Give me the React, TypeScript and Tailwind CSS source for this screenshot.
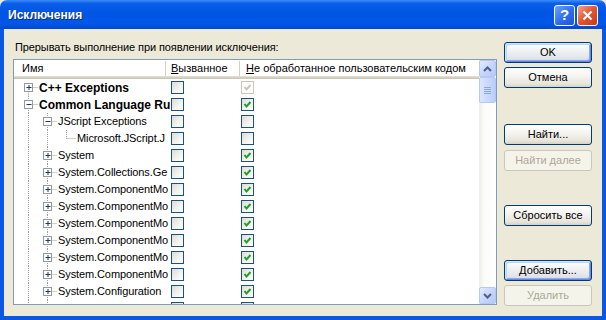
import React from "react";

type Row = {
  name: string;
  level: number;
  exp?: "+" | "-";
  bold?: boolean;
  c2: "on" | "off" | "grey";
};

// names are shown cut to the column width, as in the dialog
const rows: Row[] = [
  { name: "C++ Exceptions", level: 0, exp: "+", bold: true, c2: "grey" },
  { name: "Common Language Ru", level: 0, exp: "-", bold: true, c2: "on" },
  { name: "JScript Exceptions", level: 1, exp: "-", c2: "off" },
  { name: "Microsoft.JScript.J", level: 2, c2: "off" },
  { name: "System", level: 1, exp: "+", c2: "on" },
  { name: "System.Collections.Ge", level: 1, exp: "+", c2: "on" },
  { name: "System.ComponentMo", level: 1, exp: "+", c2: "on" },
  { name: "System.ComponentMo", level: 1, exp: "+", c2: "on" },
  { name: "System.ComponentMo", level: 1, exp: "+", c2: "on" },
  { name: "System.ComponentMo", level: 1, exp: "+", c2: "on" },
  { name: "System.ComponentMo", level: 1, exp: "+", c2: "on" },
  { name: "System.ComponentMo", level: 1, exp: "+", c2: "on" },
  { name: "System.Configuration", level: 1, exp: "+", c2: "on" },
  { name: "", level: 1, exp: "+", c2: "on" },
];

const TreeGlyph = ({ row, index }: { row: Row; index: number }) => {
  const w = 25 + 19 * row.level;
  const cx = 14.5 + 19 * row.level;
  const dot = { stroke: "#A0A0A0", strokeWidth: 1, strokeDasharray: "1 1" };
  return (
    <svg width={w} height={17} className="shrink-0">
      <line x1={14.5} y1={index === 0 ? 8.5 : 0} x2={14.5} y2={17} {...dot} />
      {row.level >= 1 && <line x1={33.5} y1={0} x2={33.5} y2={17} {...dot} />}
      {row.level === 2 && <line x1={52.5} y1={0} x2={52.5} y2={8.5} {...dot} />}
      <line x1={row.exp ? cx + 4 : cx} y1={8.5} x2={w - 1} y2={8.5} {...dot} />
      {row.exp && (
        <g>
          <rect x={cx - 4} y={4.5} width={8} height={8} fill="#ffffff" stroke="#919B9C" />
          <line x1={cx - 2} y1={8.5} x2={cx + 3} y2={8.5} stroke="#1E395B" />
          {row.exp === "+" && <line x1={cx + 0.5} y1={6} x2={cx + 0.5} y2={11} stroke="#1E395B" />}
        </g>
      )}
    </svg>
  );
};

const Check = ({ state }: { state: "on" | "off" | "grey" }) => (
  <div
    className={
      state === "grey"
        ? "w-[13px] h-[13px] border border-[#CAC8BB] bg-white shrink-0"
        : "w-[13px] h-[13px] border border-[#1C5180] bg-[linear-gradient(135deg,#DCDCD7_0%,#F4F4F0_60%,#FFFFFF_100%)] shrink-0"
    }
  >
    {state !== "off" && (
      <svg width={11} height={11}>
        <polyline
          points="2.5,5 4.5,7.5 8.5,3"
          fill="none"
          stroke={state === "grey" ? "#C8C6B8" : "#21A121"}
          strokeWidth={2}
        />
      </svg>
    )}
  </div>
);

const XpButton = ({
  label,
  kind = "normal",
  className = "",
}: {
  label: string;
  kind?: "normal" | "default" | "disabled";
  className?: string;
}) => {
  const base = "h-[21px] w-[88px] rounded-[3px] flex items-center justify-center text-[11px] ";
  const style =
    kind === "disabled"
      ? "border border-[#C9C7BA] bg-[#F5F4EA] text-[#ACA899]"
      : kind === "default"
      ? "border border-[#003C74] bg-[linear-gradient(to_bottom,#FFFFFF_0%,#EEF0F2_45%,#DEE2E8_85%,#C9CFDA_100%)] shadow-[inset_1px_1px_0_#CEE7FF,inset_-1px_-1px_0_#6982EE,inset_2px_2px_0_#BCD4F6,inset_-2px_-2px_0_#89ADE4] text-black"
      : "border border-[#003C74] bg-[linear-gradient(to_bottom,#FFFFFF_0%,#F4F3EE_45%,#E6E4DA_85%,#D6D0C5_100%)] text-black";
  return <div className={base + style + " " + className}>{label}</div>;
};

export default function App() {
  return (
    <div className="w-[606px] h-[320px] overflow-hidden bg-[#ECE9D8] flex flex-col [font-family:'Liberation_Sans',Arial,sans-serif] text-[11px] text-black">
      {/* title bar */}
      <div className="h-[29px] shrink-0 rounded-t-[7px] bg-[linear-gradient(to_bottom,#3D8CF5_0%,#0A5EEA_12%,#0054E3_45%,#0058E8_80%,#0047CF_100%)] flex items-center pl-[8px] pr-[8px]">
        <span className="text-white font-bold text-[12px] [text-shadow:1px_1px_0_#0A2A8A]">
          Исключения
        </span>
        <div className="ml-auto flex gap-[2px] mt-[1px]">
          <div className="w-[21px] h-[21px] rounded-[3px] border border-white bg-[linear-gradient(135deg,#6FA3FB_0%,#2E6CEE_55%,#1E52D8_100%)] flex items-center justify-center text-white font-bold text-[15px]">
            ?
          </div>
          <div className="w-[21px] h-[21px] rounded-[3px] border border-white bg-[linear-gradient(135deg,#F2A48A_0%,#E2552F_50%,#C8391A_100%)] flex items-center justify-center">
            <svg width={11} height={11}>
              <line x1={1.5} y1={1.5} x2={9.5} y2={9.5} stroke="#ffffff" strokeWidth={2.2} />
              <line x1={9.5} y1={1.5} x2={1.5} y2={9.5} stroke="#ffffff" strokeWidth={2.2} />
            </svg>
          </div>
        </div>
      </div>

      {/* body */}
      <div className="flex-1 flex border-x-4 border-b-4 border-[#0A58E2] pl-[9px]">
        <div className="w-[484px] flex flex-col">
          <div className="mt-[12px] h-[13px] leading-[13px] pl-[2px] tracking-[-0.1px]">
            Прерывать выполнение при появлении исключения:
          </div>
          <div className="mt-[5px] h-[246px] border border-[#7F9DB9] bg-white flex overflow-hidden">
            <div className="w-[465px] flex flex-col overflow-hidden">
              <div className="h-[19px] shrink-0 flex items-center bg-white shadow-[inset_0_-1px_0_#CBC7B8,inset_0_-2px_0_#D6D2C2,inset_0_-3px_0_#E2DECD] pb-[2px]">
                <div className="w-[152px] flex items-center">
                  <span className="pl-[8px] flex-1">Имя</span>
                  <div className="w-px h-[15px] bg-[#D4D2C4]" />
                </div>
                <div className="w-[74px] flex items-center">
                  <span className="pl-[5px] flex-1">
                    <span className="underline">В</span>ызванное
                  </span>
                  <div className="w-px h-[15px] bg-[#D4D2C4]" />
                </div>
                <div className="flex-1 pl-[6px] whitespace-nowrap">
                  <span className="underline">Н</span>е обработанное пользовательским кодом
                </div>
              </div>
              {rows.map((r, i) => (
                <div key={i} className="h-[17px] shrink-0 flex items-center">
                  <div className="w-[152px] h-[17px] flex items-center whitespace-nowrap">
                    <TreeGlyph row={r} index={i} />
                    <span className={r.bold ? "font-bold text-[12px]" : "tracking-[-0.1px]"}>{r.name}</span>
                  </div>
                  <div className="w-[74px] pl-[5px]">
                    <Check state="off" />
                  </div>
                  <div className="pl-[1px]">
                    <Check state={r.c2} />
                  </div>
                </div>
              ))}
            </div>
            {/* scrollbar */}
            <div className="w-[17px] shrink-0 flex flex-col bg-[linear-gradient(to_right,#EEEDE5_0%,#FBFBF8_30%,#FFFFFF_100%)]">
              <div className="h-[17px] shrink-0 rounded-[2px] border border-[#B4C8F6] bg-[linear-gradient(135deg,#E4EBFD_0%,#C8D6FB_50%,#B5C8F5_100%)] flex items-center justify-center">
                <svg width={9} height={6}>
                  <polyline points="1,5 4.5,1.5 8,5" fill="none" stroke="#4D6185" strokeWidth={2} />
                </svg>
              </div>
              <div className="h-[26px] shrink-0 rounded-[2px] border border-[#B4C8F6] bg-[linear-gradient(to_right,#DDE6FC_0%,#CBD9FC_50%,#BCCEF8_100%)] flex flex-col items-center justify-center gap-[1px]">
                <div className="w-[7px] h-px bg-[#8CA6E6]" />
                <div className="w-[7px] h-px bg-[#8CA6E6]" />
                <div className="w-[7px] h-px bg-[#8CA6E6]" />
                <div className="w-[7px] h-px bg-[#8CA6E6]" />
              </div>
              <div className="flex-1" />
              <div className="h-[17px] shrink-0 rounded-[2px] border border-[#B4C8F6] bg-[linear-gradient(135deg,#E4EBFD_0%,#C8D6FB_50%,#B5C8F5_100%)] flex items-center justify-center">
                <svg width={9} height={6}>
                  <polyline points="1,1 4.5,4.5 8,1" fill="none" stroke="#4D6185" strokeWidth={2} />
                </svg>
              </div>
            </div>
          </div>
        </div>

        {/* buttons */}
        <div className="ml-[7px] w-[88px] flex flex-col">
          <XpButton label="OK" kind="default" className="mt-[13px]" />
          <XpButton label="Отмена" className="mt-[4px]" />
          <XpButton label="Найти..." className="mt-[36px]" />
          <XpButton label="Найти далее" kind="disabled" className="mt-[5px]" />
          <XpButton label="Сбросить все" className="mt-[34px]" />
          <XpButton label="Добавить..." kind="default" className="mt-[34px]" />
          <XpButton label="Удалить" kind="disabled" className="mt-[4px]" />
        </div>
      </div>
    </div>
  );
}
